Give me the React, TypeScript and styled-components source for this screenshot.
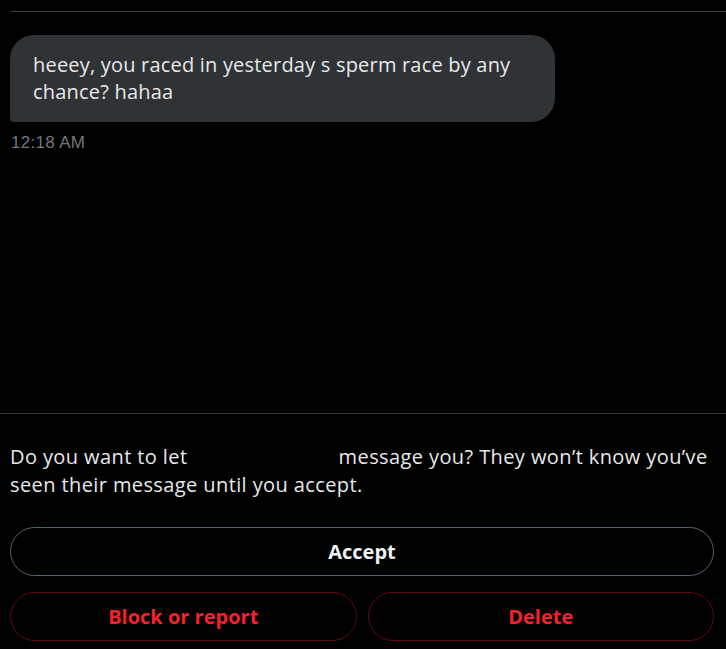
import React from "react";
import styled, { createGlobalStyle } from "styled-components";

const Global = createGlobalStyle`
  html, body { margin: 0; padding: 0; background: #000; }
  body { font-family: "Open Sans", "Noto Sans", sans-serif; color: #e7e9ea; }
  * { box-sizing: border-box; }
`;

const Page = styled.div`
  width: 726px;
  height: 649px;
  background: #000;
  display: flex;
  flex-direction: column;
  overflow: hidden;
`;

const Conversation = styled.div`
  flex: 1;
  display: flex;
  flex-direction: column;
  padding: 11px 0 0 10px;
`;

const TopRule = styled.div`
  height: 1px;
  background: #3a3d40;
`;

const Bubble = styled.div`
  margin-top: 23px;
  width: 545px;
  min-height: 87px;
  background: #2f3336;
  border-radius: 24px 24px 24px 4px;
  padding: 16px 20px 0 23px;
  font-size: 20px;
  line-height: 27px;
  color: #e7e9ea;
  letter-spacing: 0.2px;
`;

const Time = styled.div`
  margin-top: 11px;
  padding-left: 1px;
  font-family: "Liberation Sans", Arial, sans-serif;
  font-size: 17px;
  letter-spacing: 0.3px;
  color: #71767b;
`;

const Footer = styled.div`
  border-top: 1px solid #2f3336;
  padding: 29px 12px 8px 10px;
  display: flex;
  flex-direction: column;
`;

const Prompt = styled.p`
  margin: 0 0 28px 0;
  font-size: 20px;
  line-height: 28px;
  color: #e7e9ea;
  letter-spacing: 0.4px;
`;

const Hidden = styled.span`
  display: inline-block;
  width: 140px;
`;

const Actions = styled.div`
  display: grid;
  grid-template-columns: 1fr 1fr;
  gap: 16px 11px;
`;

const Pill = styled.button<{ $danger?: boolean; $wide?: boolean }>`
  grid-column: ${(p) => (p.$wide ? "1 / -1" : "auto")};
  height: 49px;
  border-radius: 999px;
  background: #000;
  border: 1px solid ${(p) => (p.$danger ? "#67070f" : "#536471")};
  color: ${(p) => (p.$danger ? "#f4212e" : "#eff3f4")};
  font-family: "Open Sans", "Noto Sans", sans-serif;
  font-weight: 700;
  font-size: 20px;
  letter-spacing: 0;
  cursor: pointer;
`;

export default function App() {
  return (
    <Page>
      <Global />
      <Conversation>
        <TopRule />
        <Bubble>heeey, you raced in yesterday s sperm race by any chance? hahaa</Bubble>
        <Time>12:18 AM</Time>
      </Conversation>
      <Footer>
        <Prompt>
          Do you want to let <Hidden /> message you? They won’t know you’ve seen their message until you accept.
        </Prompt>
        <Actions>
          <Pill $wide>Accept</Pill>
          <Pill $danger>Block or report</Pill>
          <Pill $danger>Delete</Pill>
        </Actions>
      </Footer>
    </Page>
  );
}
